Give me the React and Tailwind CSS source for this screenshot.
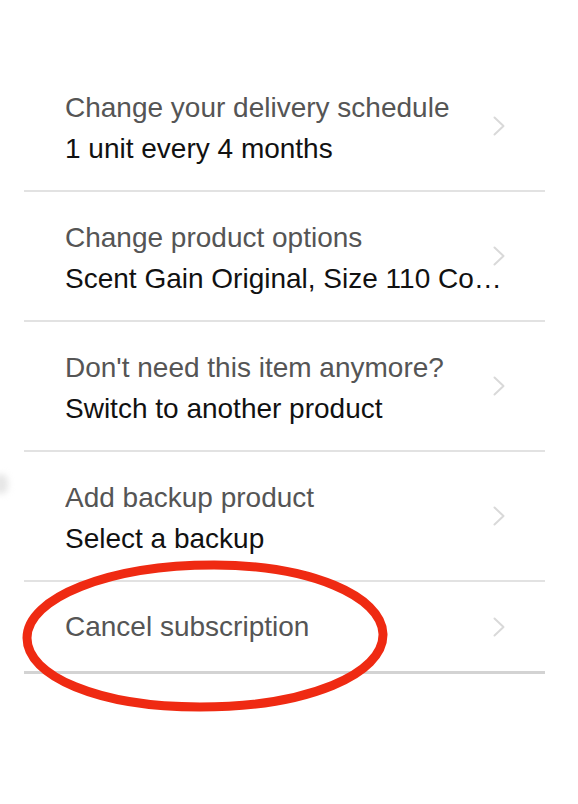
import React from "react";

const rows = [
  { title: "Change your delivery schedule", value: "1 unit every 4 months" },
  { title: "Change product options", value: "Scent Gain Original, Size 110 Count (Pack of 1)" },
  { title: "Don't need this item anymore?", value: "Switch to another product" },
  { title: "Add backup product", value: "Select a backup" },
];

const Chevron = () => (
  <svg width="12" height="20" viewBox="0 0 12 20" className="absolute left-[469px] top-1/2 -translate-y-1/2">
    <polyline points="1.5,1.5 10.5,10 1.5,18.5" fill="none" stroke="#d9d9d9" strokeWidth="2" strokeLinecap="round" strokeLinejoin="round" />
  </svg>
);

const Row = ({ title, value, last }) => (
  <div
    className={
      "relative pl-[41px] pr-[39px] " +
      (last ? "pt-[25px] pb-[24px] border-b-[3px] border-[#d3d3d3]" : "pt-[26px] pb-[21px] border-b-2 border-[#e2e2e2]")
    }
  >
    <div className="text-[28px] leading-[40px] text-[#555555] truncate">{title}</div>
    {value && <div className="text-[28px] leading-[41px] text-[#111111] truncate">{value}</div>}
    <Chevron />
  </div>
);

export default function App() {
  return (
    <div className="relative min-h-screen w-[578px] bg-white overflow-hidden" style={{ fontFamily: '"Liberation Sans", Arial, sans-serif' }}>
      {/* faint smudge on the left edge */}
      <div className="absolute left-[-6px] top-[474px] h-[20px] w-[14px] rounded-full bg-[#e6e6e6] blur-[3px]" />

      <div className="pt-[62px] ml-[24px] w-[521px]">
        {rows.map((r) => (
          <Row key={r.title} title={r.title} value={r.value} />
        ))}
        <Row title="Cancel subscription" last />
      </div>

      {/* hand-drawn red circle around cancel */}
      <svg className="absolute left-[18px] top-[556px]" width="372" height="158" viewBox="0 0 372 158">
        <path
          d="M196 9 C 292 9, 364 40, 365 78 C 366 118, 290 151, 182 151 C 80 151, 9 120, 9 82 C 9 42, 90 9, 196 9 Z"
          fill="none"
          stroke="#ef2a12"
          strokeWidth="9"
        />
      </svg>
    </div>
  );
}
